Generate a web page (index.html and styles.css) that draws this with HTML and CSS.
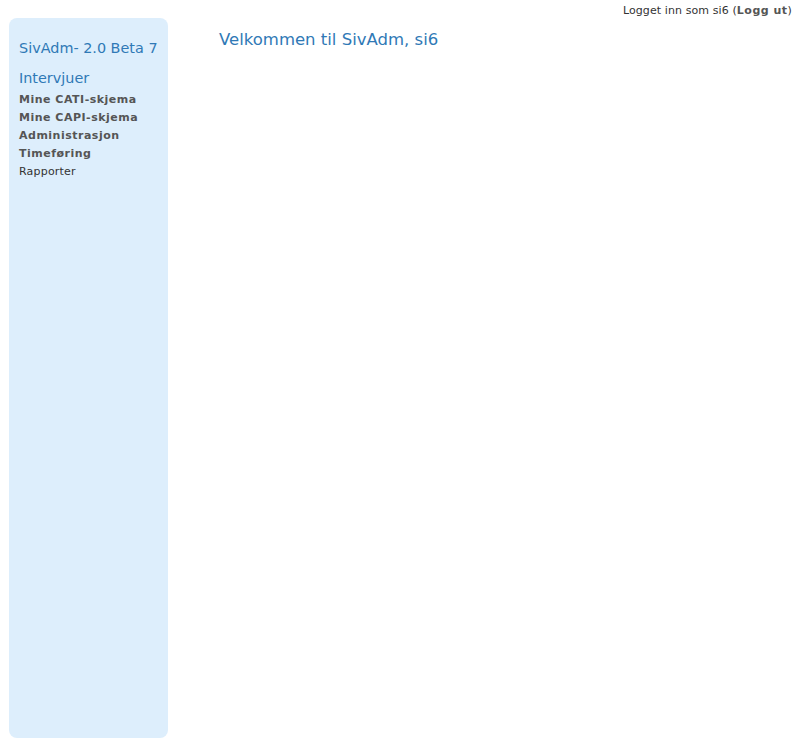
FILE: index.html
```html
<!DOCTYPE html>
<html>
<head>
<meta charset="utf-8">
<link rel="stylesheet" href="styles.css">
</head>
<body>
<div class="topbar">Logget inn som si6 (<a class="logout" href="#">Logg ut</a>)</div>
<div class="layout">
  <aside class="sidebar">
    <div class="brand">SivAdm- 2.0 Beta 7</div>
    <div class="section">Intervjuer</div>
    <ul class="menu">
      <li><a class="strong" href="#">Mine CATI-skjema</a></li>
      <li><a class="strong" href="#">Mine CAPI-skjema</a></li>
      <li><a class="strong" href="#">Administrasjon</a></li>
      <li><a class="strong" href="#">Timeføring</a></li>
      <li><a class="plain" href="#">Rapporter</a></li>
    </ul>
  </aside>
  <main class="content">
    <h1 class="welcome">Velkommen til SivAdm, si6</h1>
  </main>
</div>
</body>
</html>
```
FILE: styles.css
```css
html, body { margin: 0; padding: 0; background: #fff; }
body {
  font-family: "DejaVu Sans", Verdana, sans-serif;
  font-size: 11px;
  color: #333;
  width: 806px;
  height: 746px;
  overflow: hidden;
}
.topbar {
  height: 18px;
  line-height: 21px;
  text-align: right;
  padding-right: 14px;
  color: #333;
  letter-spacing: 0.1px;
}
.logout { color: #555; font-weight: bold; text-decoration: none; letter-spacing: 0.5px; }
.layout {
  display: flex;
  padding-left: 9px;
}
.sidebar {
  width: 159px;
  height: 720px;
  background: #ddeefc;
  border-radius: 8px;
  box-sizing: border-box;
  padding: 20px 0 0 10px;
}
.brand {
  font-size: 14.4px;
  color: #2f79b6;
  line-height: 20px;
}
.section {
  font-size: 14.4px;
  color: #2f79b6;
  line-height: 20px;
  margin-top: 10px;
}
.menu { list-style: none; margin: 3px 0 0; padding: 0; }
.menu li { line-height: 18px; height: 18px; }
.menu a { text-decoration: none; }
.strong { font-weight: bold; color: #555; letter-spacing: 0.5px; }
.plain { color: #333; letter-spacing: 0.2px; }
.content { padding-left: 51px; }
.welcome {
  margin: 10px 0 0;
  font-size: 16.5px;
  font-weight: normal;
  color: #2f79b6;
  line-height: 24px;
}
```
